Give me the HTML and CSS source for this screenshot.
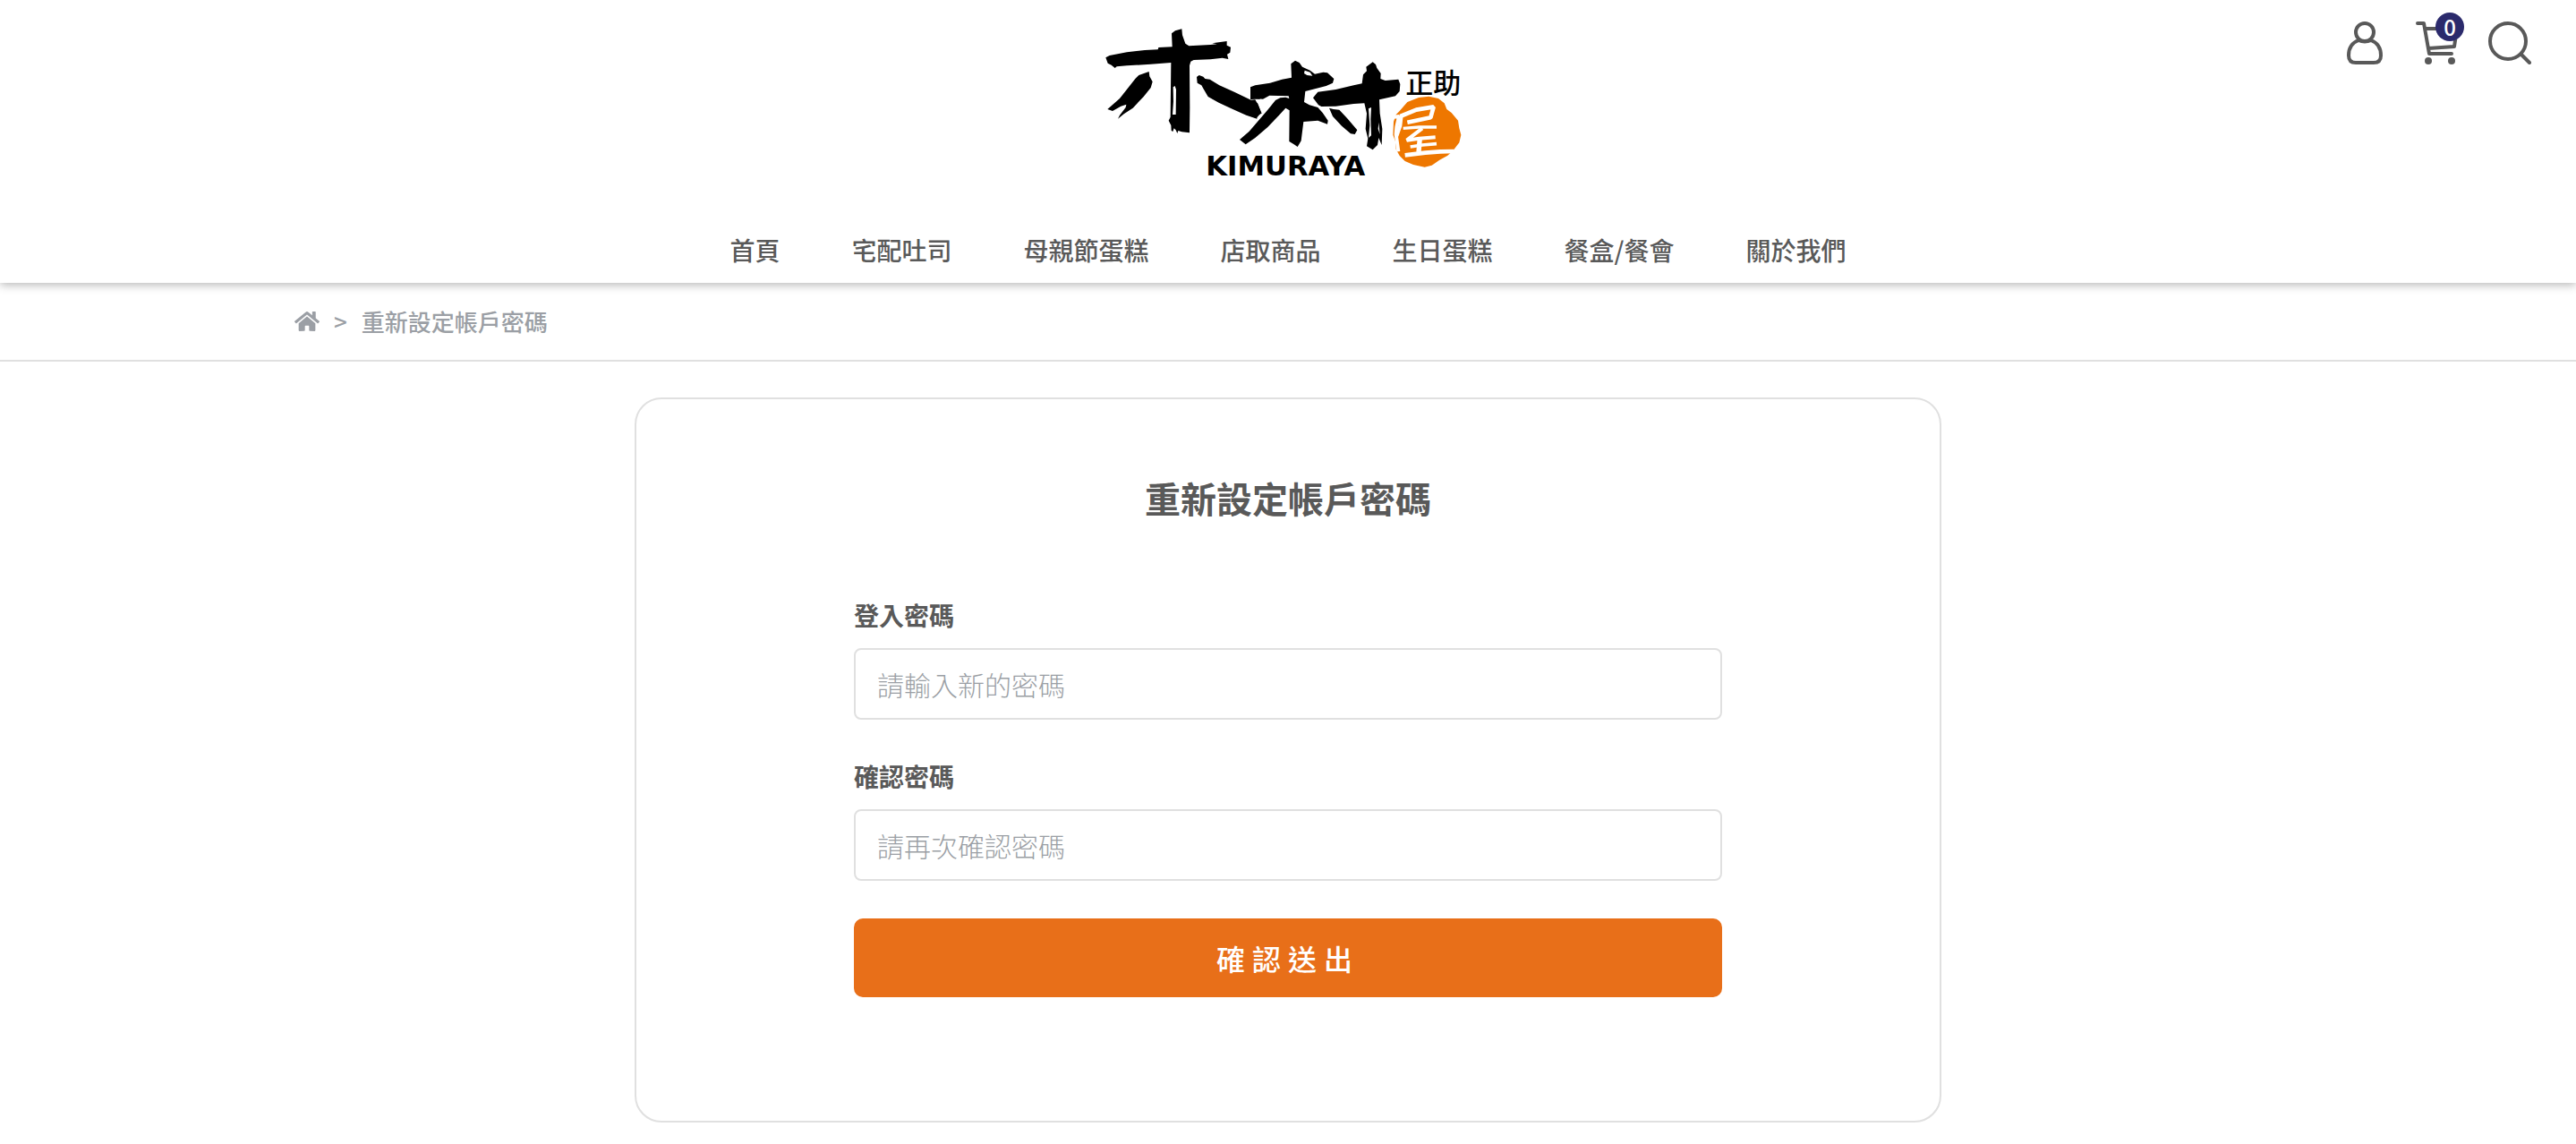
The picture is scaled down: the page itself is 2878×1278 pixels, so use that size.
FILE: index.html
```html
<!DOCTYPE html>
<html lang="zh-Hant">
<head>
<meta charset="utf-8">
<meta name="viewport" content="width=device-width, initial-scale=1">
<title>重新設定帳戶密碼</title>
<link rel="stylesheet" href="styles.css">
</head>
<body>
<header class="header">
  <div class="header-top">
    <a class="logo" href="#" aria-label="木村屋">
      <svg class="logo-art" viewBox="0 0 1320 570" role="img" aria-hidden="true">
        <!-- left brush figure -->
        <path d="M49 133L62 126L120 115L180 108L224 106L226 99L272 97L270 52L282 43L304 37L306 58L316 86L328 94L400 90L422 88L406 85L455 78L455 92L468 98L466 116L456 122L460 138L440 134L400 139L344 141L334 146L330 160L331 300L330 385L304 382L292 378L289 387L284 376L278 370L274 381L269 378L268 360L260 344L266 332L268 150L200 155L120 160L86 163L80 168L68 158L56 152Z"/>
        <path d="M194 180L196 196L206 214L200 234L176 264L140 302L110 322L90 338L96 326L116 300L118 290L100 296L72 312L55 306L96 270L148 204L160 192Z"/>
        <path d="M354 198L362 192L376 197L382 204L398 206L430 226L480 248L536 275L550 274L560 292L572 320L556 326L556 338L520 326L470 304L428 284L392 264L378 240L370 226L356 218Z"/>
        <path class="logo-gap" d="M275 232L281 228L285 240L284 324L273 324L276 280Z"/>
        <!-- right brush figure -->
        <g transform="translate(540 0)">
          <path d="M-6 232L10 226L60 218L100 206L132 200L130 154L144 143L158 150L168 164L194 176L210 188L238 182L252 184L274 204L270 218L248 228L178 246L174 282L192 292L220 300L236 318L254 344L252 356L220 344L172 348L164 412L152 432L140 424L124 414L125 310L112 302L90 326L52 366L10 402L-22 424L-42 408L-10 380L52 308L78 276L94 268L112 266L124 270L122 262L58 260L36 272L10 270L-6 274Z"/>
          <path d="M-4 232L-4 272L25 272L36 262L48 226ZM0 276L18 286L30 318L14 336L-2 330Z"/>
          <path class="logo-gap" d="M176 176L194 182L202 194L184 192L174 186Z"/>
          <path d="M204 268L220 248L280 240L340 226L368 220L372 190L384 178L382 164L404 148L414 156L418 168L431 186L430 204L446 210L490 206L496 222L494 246L480 262L426 274L428 320L436 372L434 426L424 402L420 426L404 442L384 430L388 404L380 372L384 320L376 286L340 288L280 296L232 297L222 292Z"/>
          <path d="M258 302L272 306L292 308L320 338L352 376L344 390L330 388L300 362L270 330Z"/>
          <path class="logo-gap" d="M390 304L399 300L397 340L399 394L390 402L394 360ZM424 350L428 390L422 372Z"/>
          <!-- orange seal -->
          <path class="logo-seal" d="M494 312L520 282L558 267L592 263L624 270L644 286L652 306L668 318L690 344L694 370L700 392L694 418L672 446L654 462L628 476L602 494L578 500L540 492L512 480L494 462L482 440L480 414L472 392L474 348L482 324Z"/>
          <g class="logo-brush">
            <path d="M496 330L550 308L608 298L598 334L520 350" stroke-width="14"/>
            <path d="M474 332L492 330L484 366L482 390L490 448" stroke-width="12"/>
            <path d="M500 326L496 362L484 396" stroke-width="12"/>
            <path d="M506 370L560 366L618 366" stroke-width="10"/>
            <path d="M570 370L518 410L560 404L614 400" stroke-width="12"/>
            <path d="M562 402L558 450" stroke-width="16"/>
            <path d="M530 432L570 426L618 422" stroke-width="11"/>
            <path d="M512 460L580 452L630 448L676 447" stroke-width="14"/>
          </g>
          <text class="logo-sub" x="514" y="253">正助</text>
        </g>
        <text class="logo-name" x="385" y="527">KIMURAYA</text>
      </svg>
    </a>
    <div class="tools">
      <a class="tool" href="#" aria-label="會員">
        <svg class="tool-icon" viewBox="0 0 48 48"><circle cx="24" cy="12" r="10"/><path d="M17 21C9 24 6 31 6 38Q6 46 14 46H34Q42 46 42 38C42 31 39 24 31 21Q24 24 17 21Z"/></svg>
      </a>
      <a class="tool" href="#" aria-label="購物車">
        <svg class="tool-icon" viewBox="0 0 48 48"><path d="M2 2H9L15 36H40M11 8H46L43 28L14 30"/><circle class="wheel" cx="14" cy="44" r="4"/><circle class="wheel" cx="40" cy="44" r="4"/></svg>
        <span class="badge">0</span>
      </a>
      <button class="tool" type="button" aria-label="搜尋">
        <svg class="tool-icon" viewBox="0 0 48 48"><circle cx="22" cy="22" r="20"/><path d="M37 37L46 46"/></svg>
      </button>
    </div>
  </div>
  <nav class="nav">
    <a href="#">首頁</a>
    <a href="#">宅配吐司</a>
    <a href="#">母親節蛋糕</a>
    <a href="#">店取商品</a>
    <a href="#">生日蛋糕</a>
    <a href="#">餐盒/餐會</a>
    <a href="#">關於我們</a>
  </nav>
</header>
<div class="crumb-bar">
  <nav class="crumbs container" aria-label="breadcrumb">
    <a class="crumb-home" href="#" aria-label="首頁"><svg viewBox="0 0 576 512"><path d="M280.37 148.26L96 300.11V464a16 16 0 0 0 16 16l112.06-.29a16 16 0 0 0 15.92-16V368a16 16 0 0 1 16-16h64a16 16 0 0 1 16 16v95.64a16 16 0 0 0 16 16.05L464 480a16 16 0 0 0 16-16V300L295.67 148.26a12.19 12.19 0 0 0-15.3 0zM571.6 251.47L488 182.56V44.05a12 12 0 0 0-12-12h-56a12 12 0 0 0-12 12v72.61L318.47 43a48 48 0 0 0-61 0L4.34 251.47a12 12 0 0 0-1.6 16.9l25.5 31A12 12 0 0 0 45.15 301l235.22-193.74a12.19 12.19 0 0 1 15.3 0L530.9 301a12 12 0 0 0 16.9-1.6l25.5-31a12 12 0 0 0-1.7-16.93z"/></svg></a>
    <span>&gt;</span>
    <span>重新設定帳戶密碼</span>
  </nav>
</div>
<main class="container">
  <section class="card">
    <h1 class="title">重新設定帳戶密碼</h1>
    <form class="form">
      <div class="field">
        <label for="password">登入密碼</label>
        <input id="password" type="password" placeholder="請輸入新的密碼">
      </div>
      <div class="field">
        <label for="confirm">確認密碼</label>
        <input id="confirm" type="password" placeholder="請再次確認密碼">
      </div>
      <button class="submit" type="submit">確認送出</button>
    </form>
  </section>
</main>
</body>
</html>
```

FILE: styles.css
```css
*, *::before, *::after { box-sizing: border-box; }

body {
  margin: 0;
  background: #fff;
  color: #595959;
  font-family: "Noto Sans CJK TC", "Noto Sans", sans-serif;
  font-size: 28px;
  line-height: 42px;
}

a { color: inherit; text-decoration: none; }
svg { display: block; }

.container {
  width: 100%;
  max-width: 2280px;
  margin: 0 auto;
  padding: 0 30px;
}

.header {
  position: relative;
  padding-bottom: 16px;
  background: #fff;
  box-shadow: 0 2px 10px rgba(0, 0, 0, 0.3);
}

.header-top {
  display: grid;
  grid-template-columns: 1fr auto 1fr;
  align-items: start;
  padding: 20px 50px 0;
}

.logo { grid-column: 2; }
.logo-art { width: 440px; height: 190px; fill: #000; }
.logo-gap { fill: #fff; }
.logo-seal { fill: #ee7700; }
.logo-brush { fill: none; stroke: #fff; stroke-linejoin: bevel; }
.logo-name { font: bold 92px "DejaVu Sans", sans-serif; }
.logo-sub { font: 500 93px "Noto Sans CJK TC", sans-serif; }

.tools {
  display: flex;
  justify-content: flex-end;
  gap: 33px;
  padding-top: 4px;
}
.tool {
  position: relative;
  padding: 0;
  border: 0;
  background: none;
}
.tool-icon {
  width: 48px;
  height: 48px;
  fill: none;
  stroke: #595959;
  stroke-width: 4;
  stroke-linecap: round;
  stroke-linejoin: round;
}
.wheel { fill: #595959; stroke: none; }
.badge {
  position: absolute;
  top: -10px;
  left: 22px;
  width: 32px;
  height: 32px;
  border-radius: 50%;
  background: #2b2a6c;
  color: #fff;
  font-size: 24px;
  font-weight: 500;
  line-height: 32px;
  text-align: center;
}

.nav {
  display: flex;
  flex-wrap: wrap;
  justify-content: center;
  gap: 0 80px;
  margin-top: 48px;
  font-weight: 500;
}

.crumb-bar { border-bottom: 2px solid #e0e0e0; }
.crumbs {
  display: flex;
  align-items: center;
  gap: 16px;
  padding-top: 22px;
  padding-bottom: 22px;
  color: #9b9fa5;
  font-size: 26px;
  font-weight: 500;
}
.crumb-home svg { width: 28px; height: 26px; fill: currentColor; }

.card {
  width: 100%;
  max-width: 1460px;
  margin: 40px auto 24px;
  padding: 80px 0 138px;
  border: 2px solid #e0e0e0;
  border-radius: 30px;
}
.title {
  margin: 0 0 80px;
  font-size: 40px;
  font-weight: 700;
  line-height: 60px;
  text-align: center;
}
.form {
  display: flex;
  flex-direction: column;
  gap: 42px;
  width: 100%;
  max-width: 970px;
  margin: 0 auto;
}
.field {
  display: flex;
  flex-direction: column;
  gap: 16px;
}
.field label { font-weight: 700; }
.field input {
  width: 100%;
  height: 80px;
  padding: 0 24px;
  border: 2px solid #e0e0e0;
  border-radius: 8px;
  background: #fff;
  color: #595959;
  font: 300 30px "Noto Sans CJK TC", sans-serif;
}
.field input::placeholder { color: #9b9fa5; opacity: 1; }
.submit {
  height: 88px;
  border: 0;
  border-radius: 10px;
  background: #e86f19;
  color: #fff;
  font: 500 32px "Noto Sans CJK TC", sans-serif;
  letter-spacing: 8px;
}
```
